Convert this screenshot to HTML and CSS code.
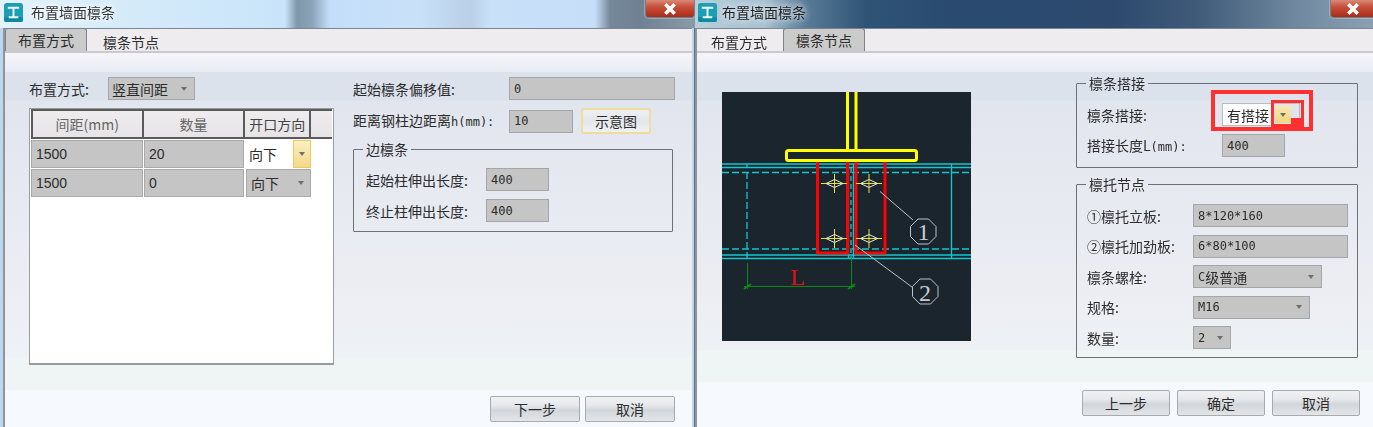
FILE: index.html
```html
<!DOCTYPE html>
<html lang="zh-CN">
<head>
<meta charset="utf-8">
<title>布置墙面檩条</title>
<link rel="stylesheet" href="styles.css">
</head>
<body>
<div class="stage">
  <section class="win win-left">
    <header class="title title-left">
      <svg class="app-icon" viewBox="0 0 20 20"><rect width="20" height="20" rx="3" fill="#1c9fb4"/><rect y="15" width="20" height="5" rx="2" fill="#0d8a9f"/><path d="M4 4h12v2h-5v8h4v2H5v-2h4V6H4z" fill="#f2fbfc"/></svg>
      <span class="title-text">布置墙面檩条</span>
      <span class="close"><svg viewBox="0 0 12 12" width="14" height="14"><path d="M2 2l8 8M10 2l-8 8" stroke="#fff" stroke-width="3"/></svg></span>
    </header>
    <div class="panel">
      <nav class="tabs">
        <span class="tab active">布置方式</span>
        <span class="tab tab-second">檩条节点</span>
      </nav>
      <div class="strip"></div>
      <div class="cols">
        <div class="col-table">
          <div class="row">
            <span class="lbl lbl-mode">布置方式:</span>
            <span class="combo combo-mode">竖直间距<i class="arrow"></i></span>
          </div>
          <div class="table">
            <div class="thead">
              <span class="th th1">间距(mm)</span>
              <span class="th th2">数量</span>
              <span class="th th3">开口方向</span>
              <span class="th th4"></span>
            </div>
            <div class="tr">
              <span class="td td1">1500</span>
              <span class="td td2">20</span>
              <span class="td td3 on"><b>向下</b><i class="drop"><i class="arrow"></i></i></span>
            </div>
            <div class="tr">
              <span class="td td1">1500</span>
              <span class="td td2">0</span>
              <span class="td td3">向下<i class="arrow arrow-end"></i></span>
            </div>
          </div>
        </div>
        <div class="col-form">
          <div class="row">
            <span class="lbl lbl-offset">起始檩条偏移值:</span>
            <span class="field f-offset">0</span>
          </div>
          <div class="row row-2">
            <span class="lbl lbl-offset">距离钢柱边距离<span class="mono">h(mm):</span></span>
            <span class="field f-h">10</span>
            <span class="btn btn-hint">示意图</span>
          </div>
          <fieldset class="group group-edge">
            <legend>边檩条</legend>
            <div class="row">
              <span class="lbl lbl-edge">起始柱伸出长度:</span>
              <span class="field f-short">400</span>
            </div>
            <div class="row row-gap">
              <span class="lbl lbl-edge">终止柱伸出长度:</span>
              <span class="field f-short">400</span>
            </div>
          </fieldset>
        </div>
      </div>
      <footer class="foot foot-left">
        <span class="btn btn-left">下一步</span>
        <span class="btn btn-left">取消</span>
      </footer>
    </div>
  </section>

  <section class="win win-right">
    <header class="title title-right">
      <svg class="app-icon" viewBox="0 0 20 20"><rect width="20" height="20" rx="3" fill="#1c9fb4"/><rect y="15" width="20" height="5" rx="2" fill="#0d8a9f"/><path d="M4 4h12v2h-5v8h4v2H5v-2h4V6H4z" fill="#f2fbfc"/></svg>
      <span class="title-text">布置墙面檩条</span>
      <span class="close close-right"><svg viewBox="0 0 12 12" width="14" height="14"><path d="M2 2l8 8M10 2l-8 8" stroke="#fff" stroke-width="3"/></svg></span>
    </header>
    <div class="panel">
      <nav class="tabs tabs-right">
        <span class="tab">布置方式</span>
        <span class="tab active">檩条节点</span>
      </nav>
      <div class="strip"></div>
      <div class="cols cols-right">
        <svg class="drawing" viewBox="0 0 249 249" width="249" height="249">
          <rect width="249" height="249" fill="#1b252d"/>
          <g fill="none" stroke="#12c8d0" stroke-width="1.300">
            <path d="M0 72H249M0 75.500H249M0 163H249M0 166.500H249"/>
            <path d="M25 72V76M229.500 72V166.500M126.500 72V166M131.500 72V166"/>
            <path d="M0 80.500H249M0 157H249M25 80V166" stroke-dasharray="7 3"/>
            <path d="M129 76V166" stroke-dasharray="5 3"/>
          </g>
          <g fill="none" stroke="#ff0000" stroke-width="3">
            <path d="M95.500 67V161H125.500V67M134 67V161H163V67"/>
          </g>
          <g fill="none" stroke="#ffff00" stroke-width="3">
            <path d="M125.500 0V58M134 0V58"/>
            <rect x="64.500" y="58.500" width="130" height="10" rx="2"/>
          </g>
          <g fill="none" stroke-width="1">
            <g><path d="M99 91.500H125M112.500 82V101" stroke="#e6e62a"/><path d="M104 91.500l8.500-4 8.500 4-8.500 4z" stroke="#e8e8e8"/></g>
            <g><path d="M134 91.500H160M147 82V101" stroke="#e6e62a"/><path d="M138.500 91.500l8.500-4 8.500 4-8.500 4z" stroke="#e8e8e8"/></g>
            <g><path d="M99 146.500H125M112.500 137V156" stroke="#e6e62a"/><path d="M104 146.500l8.500-4 8.500 4-8.500 4z" stroke="#e8e8e8"/></g>
            <g><path d="M134 146.500H160M147 137V156" stroke="#e6e62a"/><path d="M138.500 146.500l8.500-4 8.500 4-8.500 4z" stroke="#e8e8e8"/></g>
          </g>
          <g fill="none" stroke="#bfc4c6" stroke-width="1">
            <path d="M158 99.500L191 128M133 153L190 195"/>
            <path d="M196 127h10.500l7.500 7.500v10l-7.500 7.500h-10.500l-7.500-7.500v-10z"/>
            <path d="M198 187h10.500l7.500 7.500v10l-7.500 7.500h-10.500l-7.500-7.500v-10z"/>
          </g>
          <text class="num" x="201.500" y="148">1</text>
          <text class="num" x="203" y="209">2</text>
          <g fill="none" stroke="#0c8a18" stroke-width="1">
            <path d="M25.500 171V197M129.500 166V197M22 194.500H133"/>
            <path d="M22 197l7-5M126 197l7-5" stroke-width="2"/>
          </g>
          <text class="dim" x="75.500" y="193">L</text>
        </svg>
        <div class="col-node">
          <fieldset class="group group-lap">
            <legend>檩条搭接</legend>
            <div class="row">
              <span class="lbl lbl-lap">檩条搭接:</span>
              <span class="lap-combo"><b>有搭接</b><i class="lap-drop"><i class="arrow"></i></i></span>
            </div>
            <div class="row row-lap">
              <span class="lbl lbl-lap">搭接长度L<span class="mono">(mm):</span></span>
              <span class="field f-short">400</span>
            </div>
          </fieldset>
          <fieldset class="group group-node">
            <legend>檩托节点</legend>
            <div class="row">
              <span class="lbl lbl-node">①檩托立板:</span>
              <span class="field f-wide">8*120*160</span>
            </div>
            <div class="row row-node">
              <span class="lbl lbl-node">②檩托加劲板:</span>
              <span class="field f-wide">6*80*100</span>
            </div>
            <div class="row row-node">
              <span class="lbl lbl-node">檩条螺栓:</span>
              <span class="combo f-grade"><span class="mono">C</span>级普通<i class="arrow"></i></span>
            </div>
            <div class="row row-node">
              <span class="lbl lbl-node">规格:</span>
              <span class="combo f-spec mono">M16<i class="arrow"></i></span>
            </div>
            <div class="row row-node">
              <span class="lbl lbl-node">数量:</span>
              <span class="combo f-count mono">2<i class="arrow"></i></span>
            </div>
          </fieldset>
        </div>
      </div>
      <footer class="foot foot-right">
        <span class="btn btn-right">上一步</span>
        <span class="btn btn-right">确定</span>
        <span class="btn btn-right">取消</span>
      </footer>
      <span class="mark mark-outer"></span>
      <span class="mark mark-inner"></span>
      <span class="mark-nick"></span>
    </div>
  </section>
</div>
</body>
</html>
```

FILE: styles.css
```css
* { box-sizing: border-box; }
html, body { margin: 0; height: 427px; overflow: hidden; background: #fff; }
body {
  font-family: "Noto Sans CJK SC", "Liberation Sans", sans-serif;
  font-size: 14px;
  line-height: 20px;
  color: #2c2c2c;
}
i { font-style: normal; }
b { font-weight: 400; }

.stage { display: flex; width: 1373px; height: 427px; filter: blur(0.4px); }
.win { display: flex; flex-direction: column; height: 427px; position: relative; }
.win-left { width: 695px; background: #bcd8ee; padding-right: 2px; border-right: 1px solid #5d6f80; }
.win-right { width: 678px; background: #8aa6bb; }

.title { height: 28px; display: flex; align-items: center; position: relative; flex: none; padding-bottom: 4px; }
.title-left {
  margin-right: -3px;
  padding-left: 4px;
  background:
    linear-gradient(90deg, #e4f3fb 0, #d5ebf9 120px, #c9e4fa 285px, #7f97ab 297px, #8aa3b8 312px, #c4defa 330px, #c9e1f8 420px, #b8cfe6 470px, #c8e0f8 490px, #c6def8 595px, #75889a 610px, #6f8192 640px, #8a9aa8 695px);
}
.title-right {
  padding-left: 3px;
  background:
    linear-gradient(90deg, #b7cfdb 0, #a8c0cf 70px, #5a7c99 110px, #2f5476 170px, #2a4a70 260px, #2d4a6e 420px, #3f5a79 500px, #6f889f 600px, #8ba0b2 678px);
}
.app-icon { width: 19px; height: 19px; flex: none; }
.title-text { margin-left: 8px; color: #333; text-shadow: 0 0 6px #fff, 0 0 6px #fff; }
.title-right .title-text { margin-left: 5px; color: #222; text-shadow: 0 0 7px #dfeaf0, 0 0 7px #dfeaf0; }
.close {
  position: absolute;
  right: 0;
  top: 0;
  width: 50px;
  height: 18px;
  display: flex;
  align-items: center;
  justify-content: center;
  background: linear-gradient(#d98a78, #c8503a 40%, #a92b1a);
  border: 1px solid #73808c;
  border-top: 0;
  border-radius: 0 0 4px 4px;
  box-shadow: 0 0 0 1px rgba(255,255,255,.25);
}
.close-right { right: -3px; width: 46px; }

.panel {
  flex: 1;
  display: flex;
  flex-direction: column;
  position: relative;
  margin-left: 3px;
  border-top: 1px solid #7d8892;
  border-left: 2px solid #8d969e;
  background: linear-gradient(#e0e5ee 0, #e3e7ef 100px, #e9ebf2 170px, #eceef5 250px, #eef1f6 320px);
}
.win-right .panel { margin-left: 0; border-left-width: 2px; }

.tabs {
  height: 24px;
  display: flex;
  flex: none;
  align-items: flex-end;
  background: #efecef;
  border-bottom: 2px solid #c9c9cf;
}
.tab {
  height: 22px;
  line-height: 22px;
  padding: 0 14px 0 13px;
  position: relative;
  top: 2px;
}
.tab-second { margin-left: 3px; }
.tabs .active {
  background: #cbcbcb;
  border: 1px solid #7c8288;
  border-bottom: 0;
  border-radius: 3px 3px 0 0;
  height: 23px;
  top: 0;
  padding: 0 12px;
}
.tabs-right { padding-left: 1px; }
.tabs-right .active { margin-left: 2px; }

.strip { height: 19px; flex: none; background: linear-gradient(#f5f4f9, #eaedf5); }

.cols { display: flex; flex: none; height: 318px; padding: 5px 0 0 24px; gap: 19px; background: linear-gradient(#dbe2ec 0, #dbe2ec 28px, #e1e5ee 29px, #e7e9f1 110px, #ebedf3 200px, #eef1f6 285px, #eef5f4 286px); }
.col-table { width: 305px; flex: none; }
.col-form { width: 322px; flex: none; }

.row { display: flex; align-items: center; height: 23px; }
.row-2 { margin-top: 8px; height: 26px; }
.lbl { flex: none; white-space: nowrap; }
.lbl-mode { width: 79px; }
.lbl-offset { width: 156px; }
.lbl-edge { width: 120px; }
.lbl-lap { width: 135px; }
.lbl-node { width: 106px; }
.mono { font-family: "DejaVu Sans Mono", "Liberation Mono", monospace; font-size: 12px; }

.field, .combo {
  flex: none;
  display: flex;
  align-items: center;
  height: 23px;
  padding-left: 4px;
  background: #c5c5c5;
  border: 1px solid #a4a7aa;
  position: relative;
  font-family: "DejaVu Sans Mono", "Liberation Mono", "Noto Sans CJK SC", monospace;
  font-size: 12px;
}
.combo { font-family: "Noto Sans CJK SC", "Liberation Sans", sans-serif; font-size: 14px; }
.combo.mono { font-family: "DejaVu Sans Mono", "Liberation Mono", monospace; font-size: 12px; }
.arrow {
  width: 0;
  height: 0;
  border: 3px solid transparent;
  border-top: 4px solid #6f6f6f;
  border-bottom: 0;
  margin-left: auto;
  margin-right: 7px;
}
.combo-mode { width: 87px; padding-left: 3px; }
.f-offset { width: 166px; }
.f-h { width: 64px; }
.f-short { width: 63px; }
.f-wide { width: 155px; }
.f-grade { width: 129px; }
.f-spec { width: 117px; }
.f-count { width: 38px; }

.table {
  margin-top: 8px;
  height: 257px;
  background: #fff;
  border: 1px solid #9a9da0;
  border-bottom-width: 2px;
  padding: 0 1px;
}
.thead { display: flex; height: 30px; }
.th {
  display: flex;
  align-items: center;
  justify-content: center;
  background: linear-gradient(#efecee, #e6e4e7);
  border: 2px solid #5a5a5a;
  border-left-width: 0;
  color: #666;
}
.th1 { width: 113px; border-left-width: 2px; }
.th2 { width: 102px; }
.th3 { width: 66px; color: #444; }
.th4 { width: 21px; border: 0; border-top: 2px solid #5a5a5a; border-bottom: 2px solid #5a5a5a; }
.tr { display: flex; height: 29px; padding-top: 1px; }
.td {
  display: flex;
  align-items: center;
  padding-left: 4px;
  background: #c5c5c5;
  border: 1px solid #a9a9a9;
  height: 28px;
  font-family: "Liberation Sans", "Noto Sans CJK SC", sans-serif;
}
.td1 { width: 112px; margin-right: 1px; }
.td2 { width: 100px; margin-right: 2px; }
.td3 { width: 65px; font-family: "Noto Sans CJK SC", sans-serif; }
.td3.on { background: #fff; border: 0; padding-left: 3px; }
.arrow-end { margin-right: 6px; }
.drop {
  margin-left: auto;
  width: 18px;
  height: 28px;
  display: flex;
  align-items: center;
  justify-content: center;
  background: linear-gradient(#fbefc4, #f4d889);
  border: 1px solid #efc860;
}
.drop .arrow { margin: 0; }

.btn {
  flex: none;
  display: flex;
  align-items: center;
  justify-content: center;
  height: 26px;
  background: linear-gradient(#f0f1f3, #e6e8eb 35%, #d2d6da 55%, #e3e5e8);
  border: 1px solid #a7abae;
  border-radius: 2px;
}
.btn-hint { margin-left: 8px; width: 70px; border: 2px solid #f1dc9f; border-radius: 3px; background: linear-gradient(#eef0f2, #e3e6ea 50%, #f0f1f2); }
.btn-left { width: 90px; }
.btn-right { width: 88px; }

.group {
  margin: 0;
  min-width: 0;
  border: 1px solid #6d7075;
  border-radius: 1px;
  position: relative;
}
.group legend { padding: 0 3px; margin-left: -1px; line-height: 20px; }
.group-edge { margin-top: 5px; width: 320px; height: 93px; padding: 9px 0 0 12px; }
.group-edge legend { margin-left: -3px; }
.row-gap { margin-top: 8px; }

.foot { display: flex; justify-content: flex-end; flex: none; }
.foot-left { gap: 5px; padding: 6px 17px 0 0; background: #f6fafe; flex: 1; }

.cols-right { height: 310px; padding: 20px 0 0 25px; gap: 0; background: linear-gradient(#dbe2ec 0, #dbe2ec 28px, #e1e5ee 29px, #e7e9f1 110px, #ebedf3 210px, #eef1f4 278px, #eef5f4 279px); }
.drawing { flex: none; display: block; }
.num { font-family: "Liberation Serif", serif; font-size: 24px; fill: #c6cdd2; text-anchor: middle; }
.dim { font-family: "Liberation Serif", serif; font-size: 24px; fill: #e01212; text-anchor: middle; }
.col-node { margin: -20px 0 0 105px; padding-top: 1px; width: 282px; flex: none; }
.group-lap { width: 282px; height: 95px; padding: 10px 0 0 10px; }
.row-lap { margin-top: 8px; }
.group-node { width: 282px; height: 184px; margin-top: 6px; padding: 10px 0 0 10px; }
.row-node { margin-top: 7.500px; }
.lap-combo { display: flex; align-items: center; width: 78px; height: 23px; background: linear-gradient(90deg, #fff 0, #fff 50px, #dfe5ee 50px); border: 1px solid #b7bcc2; padding-left: 4px; }
.lap-drop { display: flex; align-items: center; justify-content: center; width: 16px; height: 17px; margin-left: 6px; background: linear-gradient(#f8e9b0, #f3d47f); }
.lap-drop .arrow { margin: 0; }

.foot-right { gap: 7px; padding: 8px 13px 0 0; background: #f6fafe; flex: 1; }

.mark { position: absolute; border: 3px solid #ff3030; pointer-events: none; }
.mark-outer { left: 514px; top: 61px; width: 102px; height: 41px; border-width: 4px; }
.mark-inner { left: 574px; top: 71px; width: 33px; height: 27px; }
.mark-nick { position: absolute; left: 594px; top: 89px; width: 12px; height: 8px; background: #ff3030; }
```
